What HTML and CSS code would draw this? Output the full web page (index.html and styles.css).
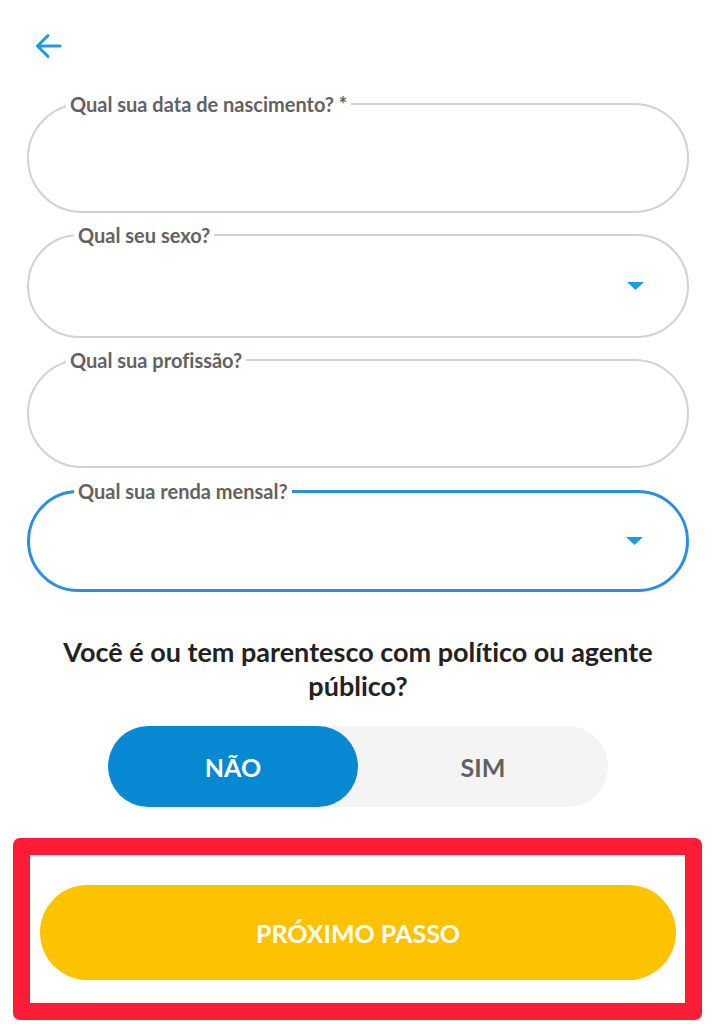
FILE: index.html
```html
<!DOCTYPE html>
<html lang="pt-BR">
<head>
<meta charset="utf-8">
<title>Cadastro</title>
<link rel="stylesheet" href="styles.css">
</head>
<body>
<div class="page">
  <header class="topbar">
    <svg class="back" width="28" height="26" viewBox="0 0 28 26" aria-label="Voltar">
      <path d="M26 13H3.5M14 2.5L3.5 13L14 23.5" fill="none" stroke="#1a9de2" stroke-width="3" stroke-linecap="round" stroke-linejoin="round"/>
    </svg>
  </header>

  <form class="form">
    <fieldset class="field field-text field-1">
      <legend>Qual sua data de nascimento? *</legend>
      <div class="field-body"></div>
    </fieldset>
    <fieldset class="field field-select field-2">
      <legend>Qual seu sexo?</legend>
      <div class="field-body">
        <svg class="caret" width="17" height="8" viewBox="0 0 17 8"><path d="M0 0H17L8.5 8Z" fill="#1a9de2"/></svg>
      </div>
    </fieldset>
    <fieldset class="field field-text field-3">
      <legend>Qual sua profissão?</legend>
      <div class="field-body"></div>
    </fieldset>
    <fieldset class="field field-select field-focus field-4">
      <legend>Qual sua renda mensal?</legend>
      <div class="field-body">
        <svg class="caret" width="17" height="8" viewBox="0 0 17 8"><path d="M0 0H17L8.5 8Z" fill="#1a9de2"/></svg>
      </div>
    </fieldset>
  </form>

  <h2 class="question">Você é ou tem parentesco com político ou agente público?</h2>

  <div class="toggle">
    <button type="button" class="opt opt-active">NÃO</button>
    <button type="button" class="opt">SIM</button>
  </div>

  <div class="highlight">
    <button type="button" class="next">PRÓXIMO PASSO</button>
  </div>
</div>
</body>
</html>
```

FILE: styles.css
```css
* { box-sizing: border-box; }

html, body {
  margin: 0;
  padding: 0;
  background: #fff;
}

body {
  font-family: Lato, "Open Sans", "Liberation Sans", sans-serif;
  font-variant-ligatures: none;
  width: 716px;
  height: 1024px;
  overflow: hidden;
}

.page {
  display: flex;
  flex-direction: column;
}

.topbar {
  padding: 33px 0 0 34px;
  height: 58px;
  display: flex;
  align-items: flex-start;
}

.back { display: block; }

.form {
  margin-top: 34px;
  padding: 0 27px;
  display: flex;
  flex-direction: column;
  gap: 10px;
}

.field {
  margin: 0;
  padding: 0;
  min-width: 0;
  border: 2px solid #d2d2d2;
  border-radius: 56px;
}

.field legend {
  font-size: 20px;
  line-height: 24px;
  font-weight: 700;
  color: #626262;
  padding: 0 4px;
  margin-left: 37px;
}

.field-select legend { margin-left: 45px; }

.field-focus {
  border: 3px solid #2a8fe4;
}
.field-focus legend { margin-left: 44px; }

.field-body {
  display: flex;
  align-items: center;
  justify-content: flex-end;
  padding-right: 43px;
}

.field-1 .field-body { height: 95px; }
.field-2 .field-body { height: 89px; padding-bottom: 11px; }
.field-3 .field-body { height: 94px; }
.field-4 { margin-top: 1px; }
.field-4 .field-body { height: 86px; padding-bottom: 10px; }

.caret { display: block; }

.question {
  margin: 43px 30px 0;
  text-align: center;
  font-size: 27px;
  line-height: 34px;
  font-weight: 700;
  color: #222;
}

.toggle {
  margin: 23px auto 0;
  width: 500px;
  height: 81px;
  display: flex;
  background: #f4f4f4;
  border-radius: 41px;
}

.opt {
  flex: 1;
  border: 0;
  background: transparent;
  border-radius: 41px;
  font-family: inherit;
  font-size: 25px;
  font-weight: 700;
  color: #606060;
  padding: 0;
}

.opt-active {
  background: #0688d2;
  color: #fff;
}

.highlight {
  margin: 31px 14px 0 13px;
  height: 182px;
  border: 17px solid #fe1c37;
  border-radius: 7px;
  padding: 30px 9px 23px 10px;
  display: flex;
}

.next {
  flex: 1;
  border: 0;
  border-radius: 48px;
  background: #fdc300;
  color: #fff;
  font-family: inherit;
  font-size: 25px;
  font-weight: 700;
  padding: 0;
}
```
